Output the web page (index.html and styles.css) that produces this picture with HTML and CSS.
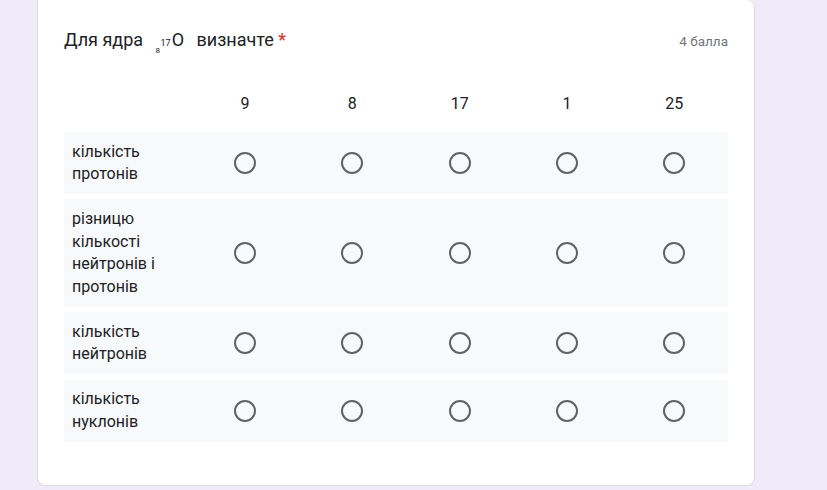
FILE: index.html
```html
<!DOCTYPE html>
<html lang="uk">
<head>
<meta charset="utf-8">
<link rel="stylesheet" href="styles.css">
</head>
<body>
<div class="card">
  <div class="head">
    <div class="title">Для ядра <span class="nuclide"><span class="idx"><sup>17</sup><sub>8</sub></span>O</span> визначте <span class="req">*</span></div>
    <div class="points">4 балла</div>
  </div>
  <div class="grid">
    <div class="colhead"></div>
    <div class="colhead">9</div>
    <div class="colhead">8</div>
    <div class="colhead">17</div>
    <div class="colhead">1</div>
    <div class="colhead">25</div>

    <div class="row">
      <div class="label">кількість протонів</div>
      <div class="cell"><span class="radio"></span></div>
      <div class="cell"><span class="radio"></span></div>
      <div class="cell"><span class="radio"></span></div>
      <div class="cell"><span class="radio"></span></div>
      <div class="cell"><span class="radio"></span></div>
    </div>
    <div class="row">
      <div class="label">різницю кількості нейтронів і протонів</div>
      <div class="cell"><span class="radio"></span></div>
      <div class="cell"><span class="radio"></span></div>
      <div class="cell"><span class="radio"></span></div>
      <div class="cell"><span class="radio"></span></div>
      <div class="cell"><span class="radio"></span></div>
    </div>
    <div class="row">
      <div class="label">кількість нейтронів</div>
      <div class="cell"><span class="radio"></span></div>
      <div class="cell"><span class="radio"></span></div>
      <div class="cell"><span class="radio"></span></div>
      <div class="cell"><span class="radio"></span></div>
      <div class="cell"><span class="radio"></span></div>
    </div>
    <div class="row">
      <div class="label">кількість нуклонів</div>
      <div class="cell"><span class="radio"></span></div>
      <div class="cell"><span class="radio"></span></div>
      <div class="cell"><span class="radio"></span></div>
      <div class="cell"><span class="radio"></span></div>
      <div class="cell"><span class="radio"></span></div>
    </div>
  </div>
</div>
</body>
</html>
```

FILE: styles.css
```css
* { box-sizing: border-box; }
html, body { margin: 0; padding: 0; }
body {
  background: #f0ebf8;
  font-family: Roboto, "Noto Sans", sans-serif;
  color: #202124;
  width: 827px;
  height: 490px;
  overflow: hidden;
}
.card {
  margin-left: 37px;
  width: 718px;
  height: 486px;
  background: #fff;
  border: 1px solid #dadce0;
  border-top: none;
  border-radius: 0 8px 8px 8px;
  padding: 26px 26px 0 26px;
}
.head {
  display: flex;
  justify-content: space-between;
  align-items: center;
  height: 27px;
}
.title {
  font-size: 18px;
  line-height: 27px;
  letter-spacing: 0;
}
.nuclide {
  display: inline-block;
  margin: 0 8px 0 8px;
}
.idx {
  display: inline-flex;
  flex-direction: column;
  font-size: 8px;
  line-height: 7px;
  vertical-align: 0px;
  margin-right: 1px;
}
.idx sup, .idx sub {
  font-size: 8px;
  vertical-align: baseline;
  line-height: 7px;
}
.idx sup { padding-left: 5px; font-size: 9px; }
.req { color: #d93025; }
.points {
  font-size: 13.5px;
  color: #70757a;
  padding-top: 2px;
}
.grid {
  display: grid;
  grid-template-columns: 127.4px repeat(5, 1fr);
  margin-top: 23px;
  row-gap: 0;
}
.colhead {
  height: 56px;
  font-size: 16px;
  line-height: 56px;
  text-align: center;
}
.row {
  display: contents;
}
.label, .cell {
  background: #f8f9fa;
  margin-bottom: 5.3px;
}
.label {
  font-size: 16px;
  line-height: 22.6px;
  padding: 8.5px 8px;
}
.cell {
  display: flex;
  align-items: center;
  justify-content: center;
}
.radio {
  width: 22px;
  height: 22px;
  border: 2px solid #5f6368;
  border-radius: 50%;
}
```
